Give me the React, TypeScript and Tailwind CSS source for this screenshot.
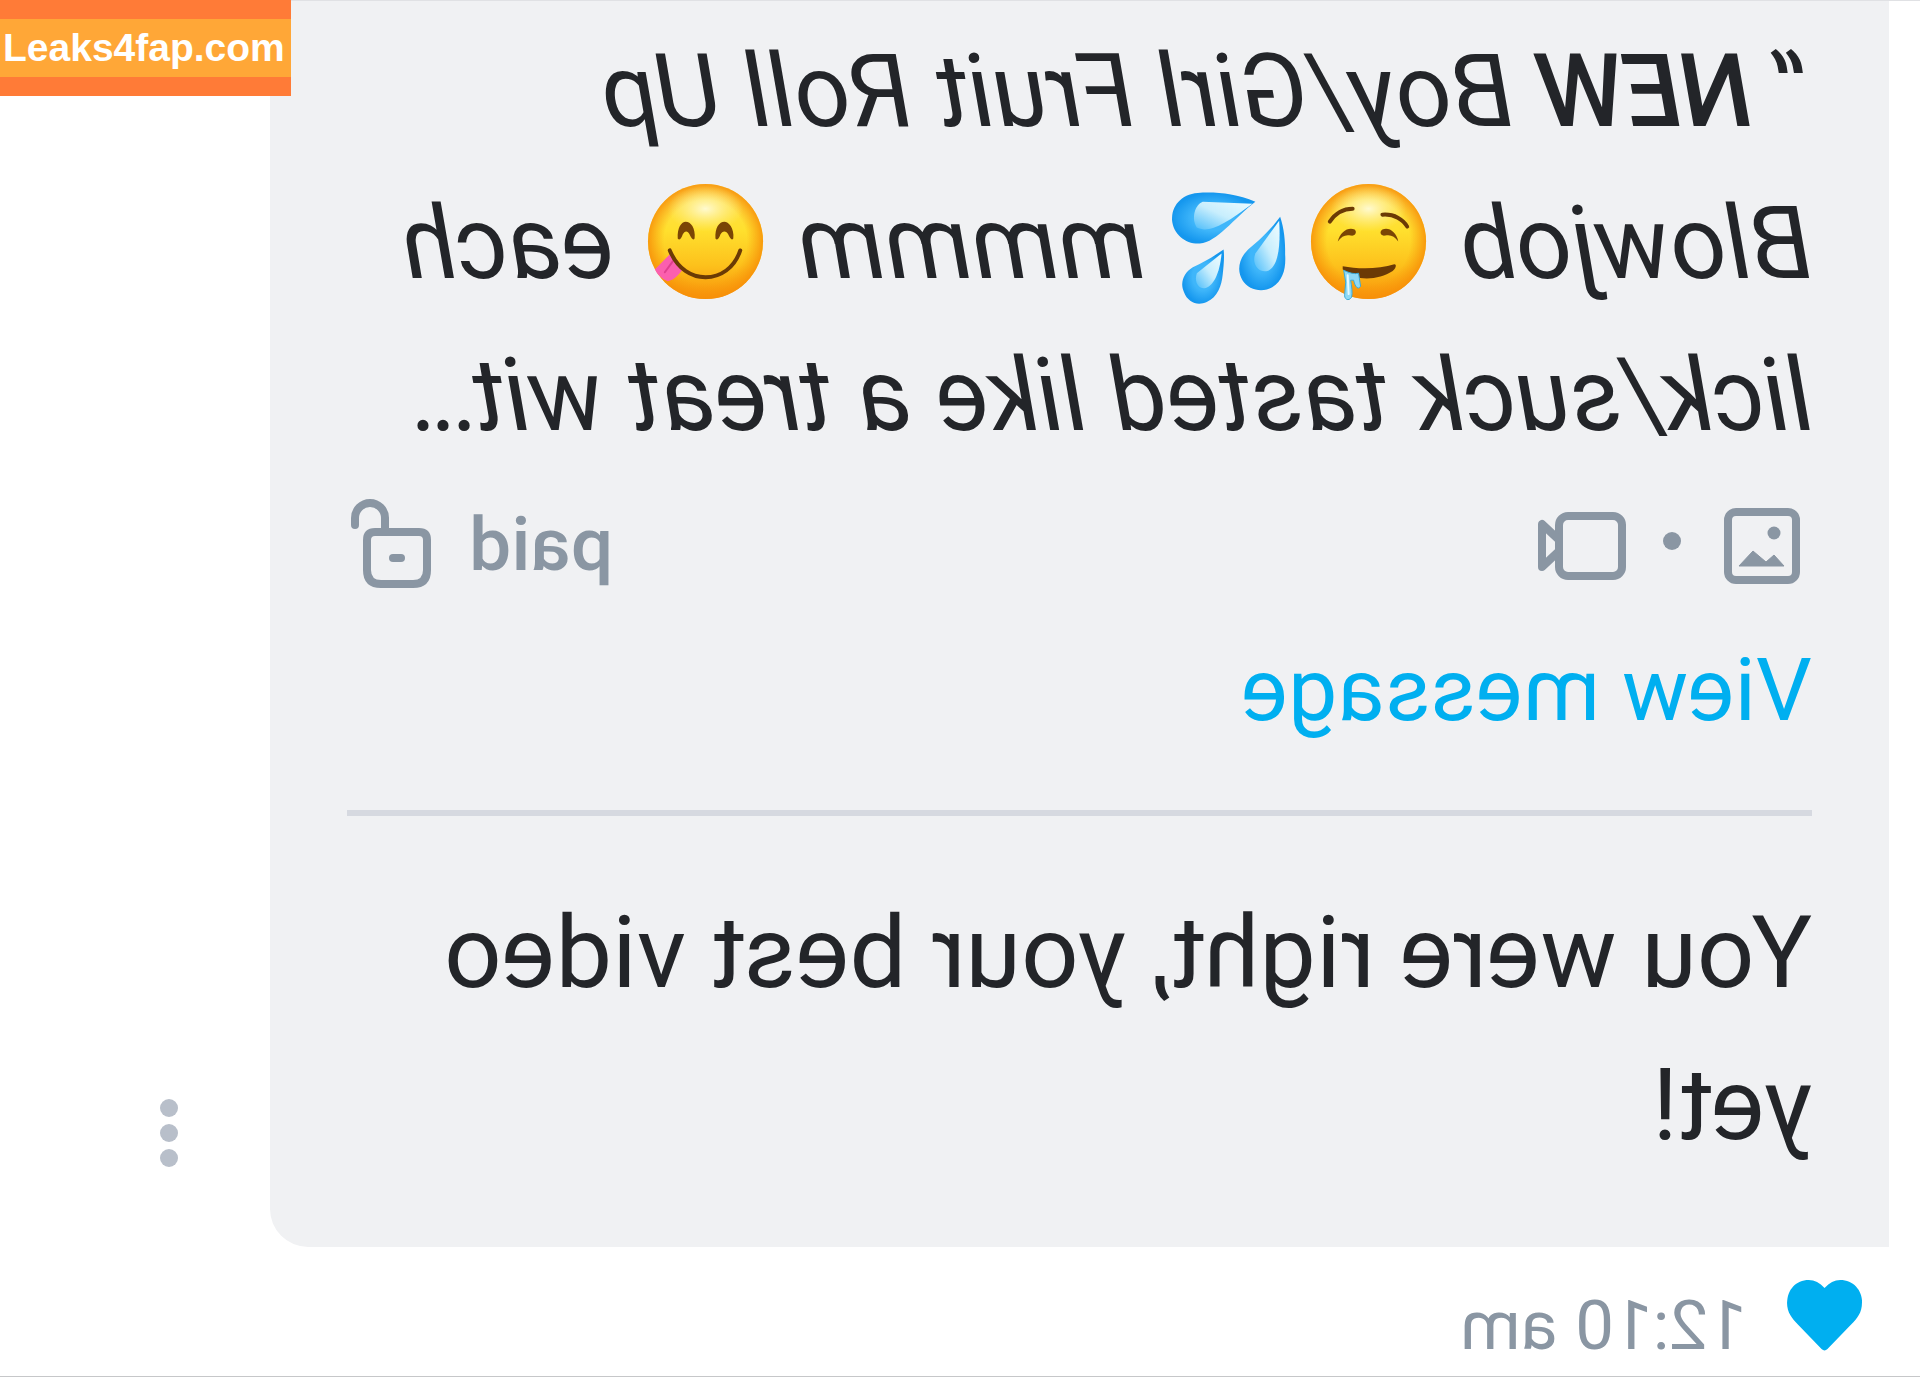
import type { ReactNode } from 'react';

const drops = [
  'M45 25 C66 16 86 15 103 16 C120 17 130 30 129 43 C128 58 115 68 101 67 C84 66 67 42 45 25 Z',
  'M20 40 C29 52 38 61 50 71 C62 81 64 94 58 104 C52 114 38 117 28 111 C17 104 14 92 15 78 C15 64 16 52 20 40 Z',
  'M77 73 C87 80 97 86 108 91 C118 97 121 107 117 116 C113 127 103 130 94 126 C83 121 79 109 78 99 C77 89 76 81 77 73 Z',
];

const shines = [
  'M48 27 L98 25 C106 28 110 42 104 51 C92 57 76 48 48 27 Z',
  'M21 44 L45 77 C49 88 42 96 34 95 C24 93 19 76 21 44 Z',
  'M79 77 L104 97 C107 106 102 113 96 112 C87 110 81 97 79 77 Z',
];

function Emoji({ label, children }: { label: string; children: ReactNode }) {
  return (
    <svg role="img" aria-label={label} viewBox="0 0 130 130" className="mx-[2px] inline-block size-[129px] align-[-28px]">
      {children}
    </svg>
  );
}

function FaceBase() {
  return (
    <>
      <circle cx="65" cy="65" r="58" fill="url(#skin)" />
      <circle cx="65" cy="65" r="58" fill="url(#rim)" />
      <ellipse cx="65" cy="32" rx="38" ry="23" fill="url(#gloss)" />
    </>
  );
}

function Drooling() {
  return (
    <Emoji label="drooling face">
      <FaceBase />
      <g fill="none" stroke="#6b3a05" strokeWidth="4" strokeLinecap="round">
        <path d="M104 45 C98 36 90 32 81 32" />
        <path d="M51 38 C39 37 30 43 26 50" />
      </g>
      <path d="M96 65 C94 55 85 50 79 53 C76 56 79 60 83 59 C89 58 92 60 96 65 Z" fill="#7a4505" />
      <path d="M35 65 C37 55 45 50 51 53 C55 56 52 60 48 59 C42 58 39 60 35 65 Z" fill="#7a4505" />
      <path d="M91 90 C76 93 54 93 39 88 C36 88 38 93 41 95 C55 104 79 106 91 93 Z" fill="#6b3a05" />
      <path d="M90 94 C84 97 79 98 75 97 L73 110 C76 115 79 109 80 104 L83 104 C82 110 81 117 82 121 C85 126 90 123 89 118 L88 106 Z" fill="#8ed9f5" stroke="#3aa9d8" strokeWidth="1" />
      <path d="M86 99 L85 118" stroke="#e4faff" strokeWidth="2" strokeLinecap="round" />
    </Emoji>
  );
}

function Droplets() {
  return (
    <Emoji label="sweat droplets">
      {drops.map((d) => <path key={d} d={d} fill="url(#water)" />)}
      {shines.map((d) => <path key={d} d={d} fill="url(#shine)" />)}
    </Emoji>
  );
}

function Yummy() {
  return (
    <Emoji label="face savoring food">
      <FaceBase />
      <path d="M100 77 C96 84 92 89 88 93 C92 99 97 104 103 105 C109 103 114 98 116 93 C110 87 105 82 100 77 Z" fill="#fb5fae" />
      <path d="M98 85 L106 96" stroke="#e0408f" strokeWidth="2" strokeLinecap="round" />
      <path d="M101 74 C93 93 79 101 65 101 C50 101 36 92 30 74" fill="none" stroke="#6b3a05" strokeWidth="4" strokeLinecap="round" />
      <path d="M93 62 C94 51 89 45 85 45 C80 45 75 51 76 62 C78 65 80 60 81 58 C83 54 86 54 88 58 C89 61 91 65 93 62 Z" fill="#7a4505" />
      <path d="M55 62 C56 51 51 45 46 45 C42 45 36 51 37 62 C39 65 41 60 42 58 C44 54 48 54 50 58 C51 61 53 65 55 62 Z" fill="#7a4505" />
    </Emoji>
  );
}

function EmojiPaint() {
  return (
    <svg aria-hidden="true" className="absolute size-0">
      <defs>
        <linearGradient id="skin" x1="0" y1="0" x2="0" y2="1">
          <stop offset="0" stopColor="#ffdf55" />
          <stop offset="0.4" stopColor="#ffe02e" />
          <stop offset="0.7" stopColor="#fdc21c" />
          <stop offset="1" stopColor="#f8920a" />
        </linearGradient>
        <radialGradient id="rim">
          <stop offset="0.72" stopColor="#f8960a" stopOpacity="0" />
          <stop offset="1" stopColor="#f78f08" stopOpacity="0.85" />
        </radialGradient>
        <radialGradient id="gloss">
          <stop offset="0" stopColor="#fffde0" stopOpacity="0.9" />
          <stop offset="1" stopColor="#fff6a0" stopOpacity="0" />
        </radialGradient>
        <radialGradient id="water">
          <stop offset="0.5" stopColor="#3fb6fa" />
          <stop offset="1" stopColor="#1597ee" />
        </radialGradient>
        <linearGradient id="shine" x1="0" y1="0" x2="1" y2="1">
          <stop offset="0" stopColor="#eefcff" />
          <stop offset="0.5" stopColor="#c8eefd" />
          <stop offset="1" stopColor="#4dbdfa" />
        </linearGradient>
      </defs>
    </svg>
  );
}

function PhotoIcon() {
  return (
    <svg viewBox="0 0 100 100" className="size-[100px]" fill="none">
      <rect x="16" y="16" width="68" height="68" rx="8" stroke="currentColor" strokeWidth="8" />
      <circle cx="38" cy="37" r="6.5" fill="currentColor" />
      <path d="M73 70 L59 55 L46 66 L38 59 L28 70 Z" fill="currentColor" stroke="currentColor" strokeWidth="1" strokeLinejoin="round" />
    </svg>
  );
}

function VideoIcon() {
  return (
    <svg viewBox="0 0 100 100" className="size-[100px]" fill="none" stroke="currentColor" strokeWidth="8" strokeLinejoin="round">
      <rect x="10" y="20" width="63" height="60" rx="9" />
      <path d="M74 43 L90 28 V71 L74 56" />
    </svg>
  );
}

function UnlockIcon() {
  return (
    <svg viewBox="0 0 100 100" className="size-[100px]" fill="none" stroke="currentColor" strokeWidth="8" strokeLinecap="round">
      <path d="M28 36 H72 Q80 36 80 44 V74 Q80 88 66 88 H34 Q20 88 20 74 V44 Q20 36 28 36 Z" />
      <path d="M62 36 V22 A15 15 0 0 1 92 22 V29" />
      <path d="M46 62 H54" />
    </svg>
  );
}

export default function App() {
  return (
    <div className="relative overflow-hidden bg-white font-[Roboto,sans-serif] text-[#232529]">
      <EmojiPaint />

      {/* the whole chat is flipped, only the banner reads normally */}
      <main className="-scale-x-100 border-y border-t-[#e0e1e4] border-b-[#c6c7c9]">
        <div className="flex items-end pl-[31px]">
          <article className="min-w-0 flex-1 rounded-br-[38px] bg-[#f0f1f3] px-[77px] pt-[14px] pb-[66px]">
            <blockquote className="text-[102px] leading-[152px] italic">
              “ <b className="font-medium">NEW</b> Boy/Girl Fruit Roll Up
              <br />
              Blowjob <Drooling /><Droplets /> mmmm <Yummy /> each
              <br />
              lick/suck tasted like a treat wit…
            </blockquote>

            <div className="mt-[25px] flex items-center text-[#8a96a3]">
              <PhotoIcon />
              <span className="flex w-20 justify-center pb-[10px]"><i className="size-[18px] rounded-full bg-current" /></span>
              <VideoIcon />
              <span className="mr-[22px] ml-auto pb-1 text-[75px] leading-[96px] font-medium">paid</span>
              <UnlockIcon />
            </div>

            <a href="#message" className="mt-6 block text-[88px] leading-[140px] text-[#00aff0]">View message</a>

            <hr className="mt-[50px] border-t-[6px] border-[#d6d9e0]" />

            <p className="mt-[61px] text-[101px] leading-[152px]">You were right, your best video<br />yet!</p>
          </article>

          <button type="button" aria-label="Message options" className="mb-[80px] flex w-[270px] flex-col items-center gap-[7px] pr-[68px]">
            <i className="size-[18px] rounded-full bg-[#b8bfca]" />
            <i className="size-[18px] rounded-full bg-[#b8bfca]" />
            <i className="size-[18px] rounded-full bg-[#b8bfca]" />
          </button>
        </div>

        <footer className="flex h-[129px] items-center gap-10 pt-2 pl-[58px]">
          <button type="button" aria-label="Like" className="text-[#00aff0]">
            <svg viewBox="0 0 76 72" className="h-[71px] w-[75px]" fill="currentColor">
              <path d="M38 8 C33 3 28 0 22 0 C9 0 0 10 0 23 C0 33 5 39 11 45 L35 70 Q38 73 41 70 L65 45 C71 39 76 33 76 23 C76 10 67 0 54 0 C48 0 43 3 38 8 Z" />
            </svg>
          </button>
          <time className="pt-5 text-[69px] leading-[80px] text-[#8a96a3]">12:10 am</time>
        </footer>
      </main>

      <div className="absolute top-0 left-0 border-y-[19px] border-[#ff7b37] bg-[#ffa737] pr-[6px] pl-[3px] font-['Liberation_Sans',sans-serif] text-[39px] leading-[58px] font-bold text-white">
        Leaks4fap.com
      </div>
    </div>
  );
}
